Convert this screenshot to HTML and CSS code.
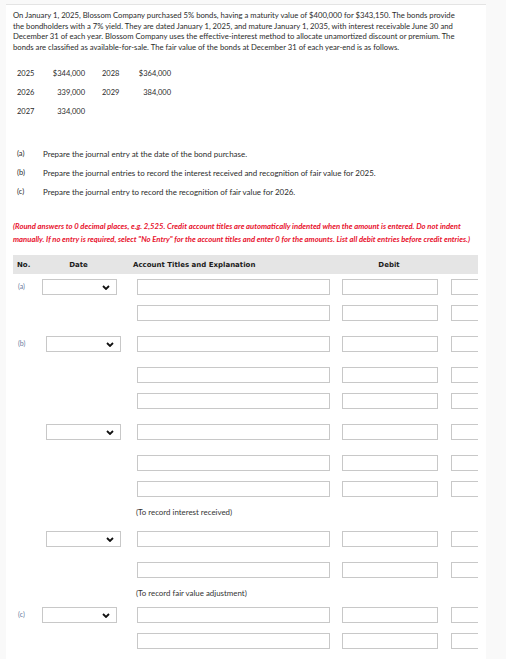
FILE: index.html
```html
<!DOCTYPE html>
<html>
<head>
<meta charset="utf-8">
<link rel="stylesheet" href="styles.css">
</head>
<body>
<div class="card">
  <p class="intro">On January 1, 2025, Blossom Company purchased 5% bonds, having a maturity value of $400,000 for $343,150. The bonds provide<br>the bondholders with a 7% yield. They are dated January 1, 2025, and mature January 1, 2035, with interest receivable June 30 and<br>December 31 of each year. Blossom Company uses the effective-interest method to allocate unamortized discount or premium. The<br>bonds are classified as available-for-sale. The fair value of the bonds at December 31 of each year-end is as follows.</p>

  <div class="values">
    <span>2025</span><span class="amt">$344,000</span><span class="y2">2028</span><span class="amt">$364,000</span>
    <span>2026</span><span class="amt">339,000</span><span class="y2">2029</span><span class="amt">384,000</span>
    <span>2027</span><span class="amt">334,000</span><span class="y2"></span><span class="amt"></span>
  </div>

  <div class="questions">
    <div class="q"><span class="ql">(a)</span><span>Prepare the journal entry at the date of the bond purchase.</span></div>
    <div class="q"><span class="ql">(b)</span><span>Prepare the journal entries to record the interest received and recognition of fair value for 2025.</span></div>
    <div class="q"><span class="ql">(c)</span><span>Prepare the journal entry to record the recognition of fair value for 2026.</span></div>
  </div>

  <p class="note">(Round answers to 0 decimal places, e.g. 2,525. Credit account titles are automatically indented when the amount is entered. Do not indent<br>manually. If no entry is required, select "No Entry" for the account titles and enter 0 for the amounts. List all debit entries before credit entries.)</p>

  <div class="journal">
    <div class="head">
      <div class="c-no">No.</div>
      <div class="c-date">Date</div>
      <div class="c-acct">Account Titles and Explanation</div>
      <div class="c-debit">Debit</div>
    </div>

    <!-- (a) -->
    <div class="row first">
      <div class="no">(a)</div>
      <div class="date"><div class="select"><svg class="chev" viewBox="0 0 8 5"><polyline points="1,1 4,4 7,1"/></svg></div></div>
      <div class="acct"><div class="box"></div></div>
      <div class="debit"><div class="box"></div></div>
      <div class="credit"><div class="box"></div></div>
    </div>
    <div class="row gs">
      <div class="no"></div><div class="date"></div>
      <div class="acct"><div class="box"></div></div>
      <div class="debit"><div class="box"></div></div>
      <div class="credit"><div class="box"></div></div>
    </div>

    <!-- (b) first entry -->
    <div class="row gl">
      <div class="no">(b)</div>
      <div class="date shift"><div class="select"><svg class="chev" viewBox="0 0 8 5"><polyline points="1,1 4,4 7,1"/></svg></div></div>
      <div class="acct"><div class="box"></div></div>
      <div class="debit"><div class="box"></div></div>
      <div class="credit"><div class="box"></div></div>
    </div>
    <div class="row gl">
      <div class="no"></div><div class="date"></div>
      <div class="acct"><div class="box"></div></div>
      <div class="debit"><div class="box"></div></div>
      <div class="credit"><div class="box"></div></div>
    </div>
    <div class="row gs">
      <div class="no"></div><div class="date"></div>
      <div class="acct"><div class="box"></div></div>
      <div class="debit"><div class="box"></div></div>
      <div class="credit"><div class="box"></div></div>
    </div>

    <!-- (b) second entry -->
    <div class="row gl">
      <div class="no"></div>
      <div class="date shift"><div class="select"><svg class="chev" viewBox="0 0 8 5"><polyline points="1,1 4,4 7,1"/></svg></div></div>
      <div class="acct"><div class="box"></div></div>
      <div class="debit"><div class="box"></div></div>
      <div class="credit"><div class="box"></div></div>
    </div>
    <div class="row gl">
      <div class="no"></div><div class="date"></div>
      <div class="acct"><div class="box"></div></div>
      <div class="debit"><div class="box"></div></div>
      <div class="credit"><div class="box"></div></div>
    </div>
    <div class="row gs">
      <div class="no"></div><div class="date"></div>
      <div class="acct"><div class="box"></div></div>
      <div class="debit"><div class="box"></div></div>
      <div class="credit"><div class="box"></div></div>
    </div>
    <div class="memo"><div class="no"></div><div class="date"></div><div class="memo-text">(To record interest received)</div></div>

    <!-- (b) third entry -->
    <div class="row gm">
      <div class="no"></div>
      <div class="date shift"><div class="select"><svg class="chev" viewBox="0 0 8 5"><polyline points="1,1 4,4 7,1"/></svg></div></div>
      <div class="acct"><div class="box"></div></div>
      <div class="debit"><div class="box"></div></div>
      <div class="credit"><div class="box"></div></div>
    </div>
    <div class="row gl">
      <div class="no"></div><div class="date"></div>
      <div class="acct"><div class="box"></div></div>
      <div class="debit"><div class="box"></div></div>
      <div class="credit"><div class="box"></div></div>
    </div>
    <div class="memo"><div class="no"></div><div class="date"></div><div class="memo-text">(To record fair value adjustment)</div></div>

    <!-- (c) -->
    <div class="row gx">
      <div class="no">(c)</div>
      <div class="date"><div class="select"><svg class="chev" viewBox="0 0 8 5"><polyline points="1,1 4,4 7,1"/></svg></div></div>
      <div class="acct"><div class="box"></div></div>
      <div class="debit"><div class="box"></div></div>
      <div class="credit"><div class="box"></div></div>
    </div>
    <div class="row gs">
      <div class="no"></div><div class="date"></div>
      <div class="acct"><div class="box"></div></div>
      <div class="debit"><div class="box"></div></div>
      <div class="credit"><div class="box"></div></div>
    </div>
  </div>
</div>
</body>
</html>
```
FILE: styles.css
```css
html, body {
  margin: 0;
  padding: 0;
  background: #f9f9f9;
}
body {
  font-family: Lato, "Liberation Sans", sans-serif;
  color: #2b2b2b;
  overflow: hidden;
}
.card {
  margin: 4px 0 0 6px;
  width: 480px;
  padding: 5px 0 0 7px;
  background: #ffffff;
  border-top: 1px solid #e4e4e4;
  min-height: 660px;
  box-sizing: border-box;
}
.intro {
  margin: 0;
  font-size: 7.7px;
  line-height: 10.5px;
  white-space: nowrap;
}
.values {
  margin-top: 12px;
  padding-left: 4px;
  display: grid;
  grid-template-columns: 34px 34px 51px 35px;
  grid-auto-rows: 19px;
  align-items: center;
  font-size: 7.5px;
}
.values .amt { text-align: right; }
.values .y2 { padding-left: 17px; }
.questions {
  margin-top: 23px;
  padding-left: 4px;
  font-size: 7.95px;
}
.q {
  display: flex;
  height: 19px;
  align-items: center;
}
.ql { width: 26px; font-size: 7.5px; }
.note {
  margin: 19px 0 0 0;
  font-size: 7.7px;
  line-height: 13px;
  font-weight: bold;
  font-style: italic;
  color: #e8112d;
  white-space: nowrap;
}
.journal {
  margin-top: 9px;
  width: 465px;
  overflow: hidden;
}
.head {
  display: flex;
  height: 19px;
  align-items: center;
  background: #e5e5e5;
  font-family: "DejaVu Sans", Verdana, sans-serif;
  font-weight: bold;
  font-size: 7px;
  color: #1a1a1a;
}
.c-no { width: 24px; padding-left: 4px; flex: none; }
.c-date { width: 75px; text-align: center; flex: none; }
.c-acct { width: 208px; padding-left: 17px; flex: none; white-space: nowrap; }
.c-debit { width: 96px; text-align: center; flex: none; }

.row {
  display: flex;
  height: 16px;
  align-items: center;
}
.row.first { margin-top: 5px; }
.row.gs { margin-top: 10px; }
.row.gl { margin-top: 15px; }
.row.gm { margin-top: 14px; }
.row.gx { margin-top: 9px; }
.no {
  width: 24px;
  padding-left: 5px;
  flex: none;
  font-size: 7px;
  color: #6a7ba0;
  align-self: flex-start;
  line-height: 14px;
}
.date { width: 95px; flex: none; }
.date.shift { padding-left: 4px; width: 91px; }
.select {
  width: 75px;
  height: 16px;
  box-sizing: border-box;
  border: 1px solid #c8c8c8;
  background: #fff;
  display: flex;
  align-items: center;
  justify-content: flex-end;
  padding-right: 6px;
}
.chev {
  width: 8px;
  height: 5px;
}
.chev polyline {
  fill: none;
  stroke: #111;
  stroke-width: 1.8;
}
.acct { width: 193px; flex: none; margin-right: 12px; }
.debit { width: 96px; flex: none; margin-right: 13px; }
.credit { width: 96px; flex: none; }
.box {
  height: 16px;
  box-sizing: border-box;
  border: 1px solid #c8c8c8;
  background: #fff;
}
.memo {
  display: flex;
  height: 10px;
  margin-top: 10px;
  align-items: center;
}
.memo-text {
  font-size: 7.9px;
  color: #333;
  white-space: nowrap;
  margin-left: -1px;
}
```
